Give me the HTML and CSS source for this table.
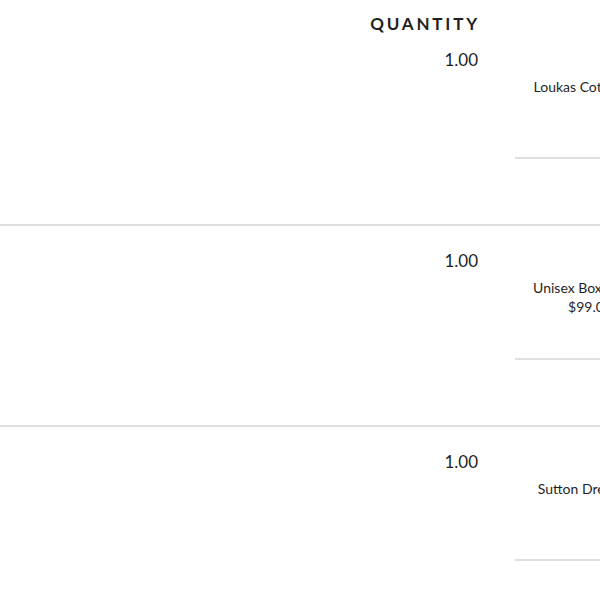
FILE: index.html
```html
<!DOCTYPE html>
<html>
<head>
<meta charset="utf-8">
<link rel="stylesheet" href="styles.css">
</head>
<body>
<div class="page">
  <div class="head">
    <div class="head-qty">Quantity</div>
  </div>
  <div class="row">
    <div class="qty">1.00</div>
    <div class="product">
      <div class="name">Loukas Cotton Tee</div>
      <div class="rule"></div>
    </div>
  </div>
  <div class="row">
    <div class="qty">1.00</div>
    <div class="product">
      <div class="name">Unisex Boxer Brief $99.00</div>
      <div class="rule"></div>
    </div>
  </div>
  <div class="row">
    <div class="qty">1.00</div>
    <div class="product">
      <div class="name">Sutton Dress Top</div>
      <div class="rule"></div>
    </div>
  </div>
</div>
</body>
</html>
```
FILE: styles.css
```css
html, body {
  margin: 0;
  padding: 0;
  background: #fff;
  overflow: hidden;
}
.page {
  width: 700px;
  font-family: Lato, "Noto Sans", sans-serif;
  color: #1f1f1f;
}
.head {
  display: grid;
  grid-template-columns: 478px;
  padding-top: 14px;
  margin-bottom: -9px;
  position: relative;
}
.head-qty {
  text-align: right;
  text-transform: uppercase;
  font-size: 17px;
  line-height: 20px;
  font-weight: 700;
  letter-spacing: 2.8px;
  margin-right: -2px;
}
.row {
  display: grid;
  grid-template-columns: 478px 150px;
  column-gap: 37px;
  height: 199px;
  border-bottom: 2px solid #dedede;
}
.qty {
  text-align: right;
  font-size: 17px;
  line-height: 20px;
  padding-top: 25px;
  margin-bottom: -1px;
}
.product {
  padding-top: 52px;
  display: flex;
  flex-direction: column;
}
.name {
  text-align: center;
  font-size: 14px;
  line-height: 19px;
  height: 80px;
}
.rule {
  border-top: 2px solid #e0e0e0;
}
```
